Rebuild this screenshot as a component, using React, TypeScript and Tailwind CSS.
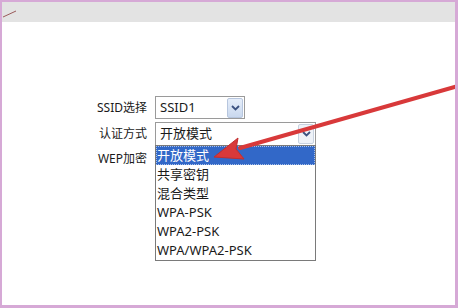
import React from "react";

const Chevron = () => (
  <svg width="9" height="6" viewBox="0 0 9 6">
    <path d="M1 1 L4.5 4.5 L8 1" fill="none" stroke="#3c5280" strokeWidth="1.8" />
  </svg>
);

const ArrowBtn = ({ faded = false }: { faded?: boolean }) => (
  <div
    className={`flex items-center justify-center w-[16px] h-[20px] border rounded-[2px] ${
      faded ? "border-[#c8d2e0] bg-[#eef2f8]" : "border-[#b7c6de] bg-gradient-to-b from-[#e6eefa] to-[#c9d8ee]"
    }`}
  >
    <Chevron />
  </div>
);

const options = ["开放模式", "共享密钥", "混合类型", "WPA-PSK", "WPA2-PSK", "WPA/WPA2-PSK"];

export default function App() {
  return (
    <div
      className="relative w-[458px] h-[308px] overflow-hidden bg-white border-t-2 border-l-2 border-r-[3px] border-b-[3px] border-[#d6a9d6] flex flex-col text-[#1a1a1a]"
      style={{ fontFamily: '"Noto Sans", "Noto Sans CJK SC", sans-serif' }}
    >
      <div className="h-[20px] bg-[#e3e3e3] shrink-0" />
      <div className="flex-1 pt-[74px] pl-[86px]">
        <div className="grid grid-cols-[59px_auto] gap-x-[8px] gap-y-[3px] items-center text-[12px] w-max">
          <div className="text-right leading-[23px]">SSID选择</div>
          <div className="w-[90px] h-[23px] border border-[#9a9a9a] bg-white flex items-center justify-between pl-[4px] pr-[1px] text-[13px]">
            <span>SSID1</span>
            <ArrowBtn />
          </div>
          <div className="text-right leading-[24px]">认证方式</div>
          <div className="relative w-[161px] h-[24px] border border-[#9a9a9a] bg-white flex items-center justify-between pl-[4px] pr-[1px] text-[13px]">
            <span>开放模式</span>
            <ArrowBtn faded />
            <div className="absolute left-[-1px] top-[22px] w-[161px] border border-[#7a7a7a] bg-white z-10 text-[13px]">
              {options.map((o, i) => (
                <div
                  key={o}
                  className={`h-[19px] leading-[19px] pl-[1px] ${
                    i === 0 ? "bg-[#3268c8] text-white outline-1 outline-dotted outline-[#a8c0e8] -outline-offset-1" : ""
                  }`}
                >
                  {o}
                </div>
              ))}
            </div>
          </div>
          <div className="text-right leading-[22px] mt-[-2px]">WEP加密</div>
          <div className="w-[161px] h-[22px]" />
        </div>
      </div>
      <svg className="absolute left-[-2px] top-[-2px] z-20 pointer-events-none" width="458" height="308">
        <line x1="3" y1="17" x2="16" y2="11" stroke="#9a5a5a" strokeWidth="1" />
        <path d="M458 86 L240 148" stroke="#d8393a" strokeWidth="4" strokeLinecap="round" />
        <path d="M214 157 L238 138 L236 149 L244 159 Z" fill="#d8393a" stroke="#c22e2e" strokeWidth="1" strokeLinejoin="round" />
      </svg>
    </div>
  );
}
